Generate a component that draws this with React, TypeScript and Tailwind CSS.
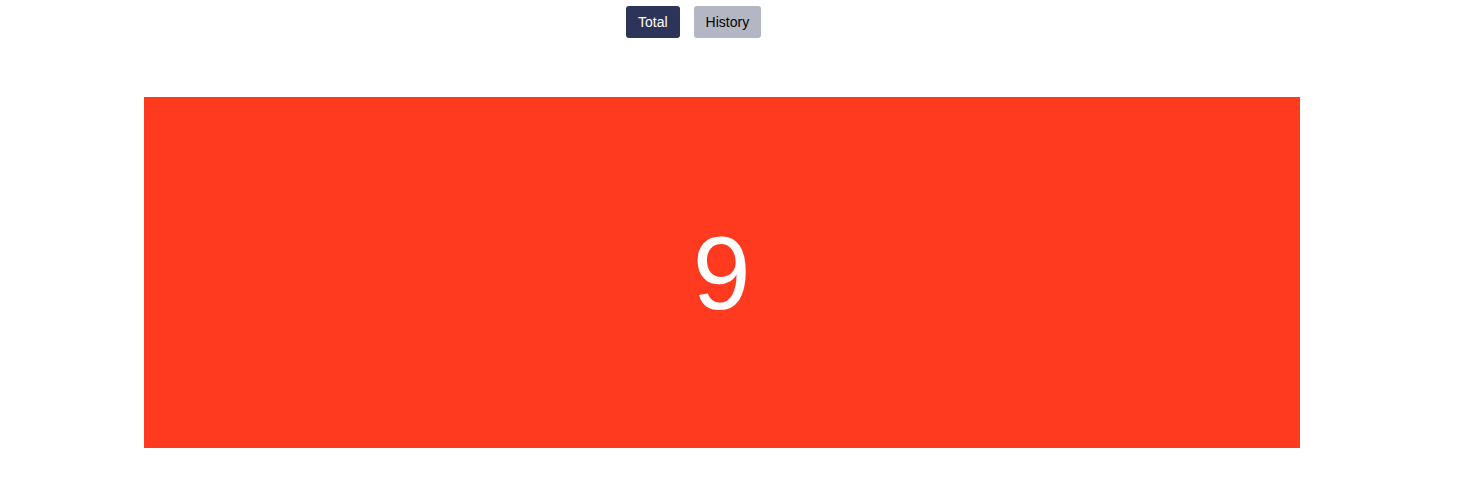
export default function App() {
  return (
    <div className="min-h-[502px] bg-white font-['Liberation_Sans',Arial,sans-serif]">
      <div className="flex gap-[14px] pl-[626px] pt-[6px]">
        <button className="h-[32px] rounded-[3px] bg-[#2c3459] px-[12px] text-[14px] text-white">Total</button>
        <button className="h-[32px] rounded-[3px] bg-[#b3b7c4] px-[12px] text-[14px] text-black">History</button>
      </div>
      <div className="ml-[143.5px] mt-[59px] flex h-[351px] w-[1156.5px] items-center justify-center bg-[#ff3a1f]">
        <span className="text-[104px] leading-none text-white">9</span>
      </div>
    </div>
  );
}
